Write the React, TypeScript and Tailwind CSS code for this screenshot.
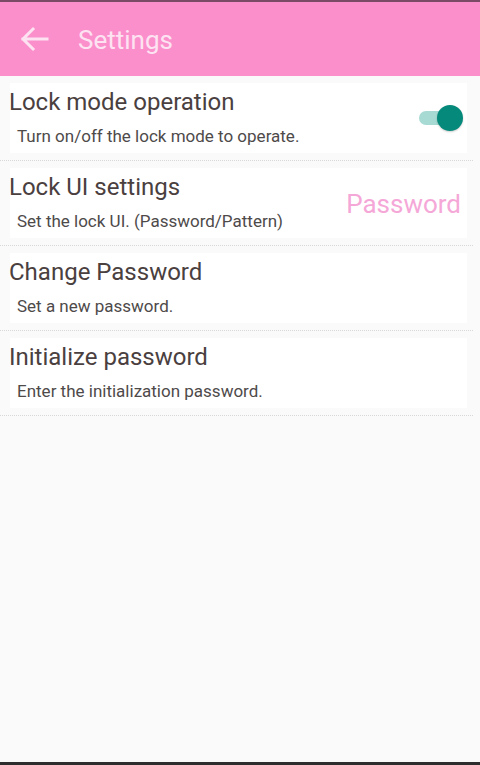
import React from "react";

function Row({ title, sub, right }: { title: string; sub: string; right?: React.ReactNode }) {
  return (
    <div className="border-b border-dotted border-[#d8d8d8] mr-[7px]">
      <div className="flex items-center bg-white ml-[10px] mr-[6px] my-[7px] h-[70px]">
        <div className="flex-1 flex flex-col -mt-[3px]">
          <div className="text-[24px] leading-[28px] text-[#4a4040] -ml-[1px]">{title}</div>
          <div className="text-[17px] leading-[20px] text-[#4e4a4a] ml-[7px] mt-[10px]">{sub}</div>
        </div>
        {right}
      </div>
    </div>
  );
}

export default function App() {
  return (
    <div className="w-[480px] h-[765px] bg-[#fafafa] flex flex-col" style={{ fontFamily: "Roboto, 'Noto Sans', sans-serif" }}>
      <div className="h-[2px] bg-[#7a4a66]" />
      <div className="h-[74px] bg-[#fb8fcc] flex items-center">
        <svg width="30" height="26" viewBox="0 0 30 26" className="ml-[19px]">
          <path d="M28 13H4M14 3L4 13l10 10" fill="none" stroke="#fde3f2" strokeWidth="3" strokeLinecap="square" />
        </svg>
        <div className="ml-[29px] text-[26px] text-[#fde3f2] mt-[2px]">Settings</div>
      </div>
      <Row
        title="Lock mode operation"
        sub="Turn on/off the lock mode to operate."
        right={
          <div className="relative w-[44px] h-[28px] mr-[4px] flex items-center">
            <div className="w-[36px] h-[14px] rounded-full bg-[#a6dad3]" />
            <div className="absolute right-[0px] top-[1px] w-[26px] h-[26px] rounded-full bg-[#04897a] shadow-[0_1px_2px_rgba(0,0,0,0.2)]" />
          </div>
        }
      />
      <Row
        title="Lock UI settings"
        sub="Set the lock UI. (Password/Pattern)"
        right={<div className="text-[26px] text-[#f5a8d8] mr-[6px] mt-[2px]">Password</div>}
      />
      <Row title="Change Password" sub="Set a new password." />
      <Row title="Initialize password" sub="Enter the initialization password." />
      <div className="flex-1" />
      <div className="h-[3px] bg-[#2d2d2d]" />
    </div>
  );
}
